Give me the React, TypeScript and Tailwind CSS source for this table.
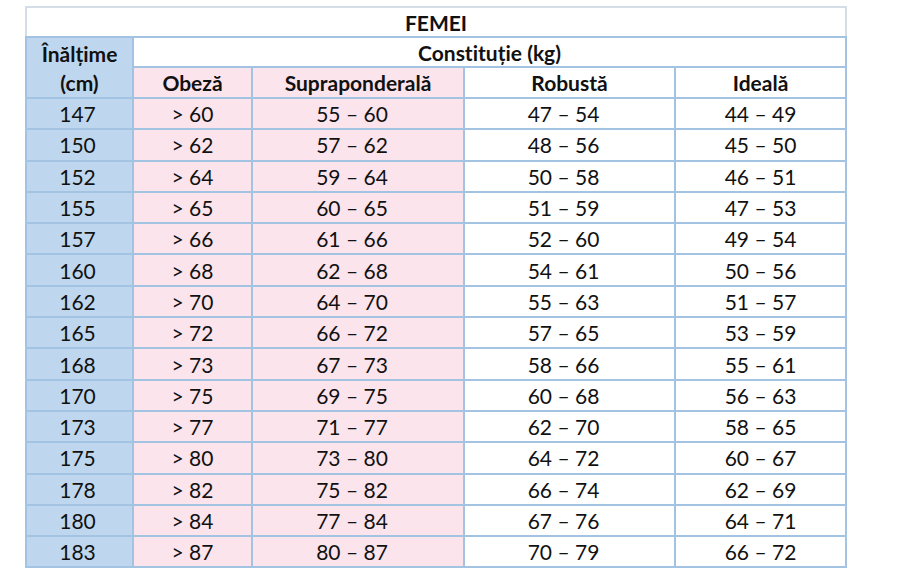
const rows: [string, string, string, string, string][] = [
  ["147", "> 60", "55 – 60", "47 – 54", "44 – 49"],
  ["150", "> 62", "57 – 62", "48 – 56", "45 – 50"],
  ["152", "> 64", "59 – 64", "50 – 58", "46 – 51"],
  ["155", "> 65", "60 – 65", "51 – 59", "47 – 53"],
  ["157", "> 66", "61 – 66", "52 – 60", "49 – 54"],
  ["160", "> 68", "62 – 68", "54 – 61", "50 – 56"],
  ["162", "> 70", "64 – 70", "55 – 63", "51 – 57"],
  ["165", "> 72", "66 – 72", "57 – 65", "53 – 59"],
  ["168", "> 73", "67 – 73", "58 – 66", "55 – 61"],
  ["170", "> 75", "69 – 75", "60 – 68", "56 – 63"],
  ["173", "> 77", "71 – 77", "62 – 70", "58 – 65"],
  ["175", "> 80", "73 – 80", "64 – 72", "60 – 67"],
  ["178", "> 82", "75 – 82", "66 – 74", "62 – 69"],
  ["180", "> 84", "77 – 84", "67 – 76", "64 – 71"],
  ["183", "> 87", "80 – 87", "70 – 79", "66 – 72"],
];

const cell = "border-2 border-[#a3c3e2] text-center p-0 leading-none";

export default function App() {
  return (
    <div className="w-[900px] h-[572px] bg-white pt-[6px] pl-[25px] font-['Lato','Open_Sans',sans-serif] text-[21px] text-[#111] [font-variant-ligatures:none]">
      <table className="table-fixed border-collapse w-[820px]">
        <colgroup>
          <col className="w-[107px]" />
          <col className="w-[119px]" />
          <col className="w-[212px]" />
          <col className="w-[211px]" />
          <col className="w-[171px]" />
        </colgroup>
        <thead>
          <tr className="h-[30px]">
            <th colSpan={5} className="border-2 border-[#d6dde6] border-b-[#a3c3e2] font-bold leading-none p-0">
              FEMEI
            </th>
          </tr>
          <tr className="h-[30px]">
            <th rowSpan={2} className={`${cell} bg-[#bed7ee] font-bold !leading-[29px]`}>
              Înălțime
              <br />
              (cm)
            </th>
            <th colSpan={4} className={`${cell} font-bold`}>
              Constituție (kg)
            </th>
          </tr>
          <tr className="h-[31px]">
            <th className={`${cell} bg-[#fce4ec] font-bold`}>Obeză</th>
            <th className={`${cell} bg-[#fce4ec] font-bold`}>Supraponderală</th>
            <th className={`${cell} font-bold`}>Robustă</th>
            <th className={`${cell} font-bold`}>Ideală</th>
          </tr>
        </thead>
        <tbody>
          {rows.map((r) => (
            <tr key={r[0]} className="h-[31.3px]">
              <td className={`${cell} bg-[#bed7ee] pr-1`}>{r[0]}</td>
              <td className={`${cell} bg-[#fce4ec]`}>{r[1]}</td>
              <td className={`${cell} bg-[#fce4ec] pr-3`}>{r[2]}</td>
              <td className={`${cell} pr-3`}>{r[3]}</td>
              <td className={cell}>{r[4]}</td>
            </tr>
          ))}
        </tbody>
      </table>
    </div>
  );
}
